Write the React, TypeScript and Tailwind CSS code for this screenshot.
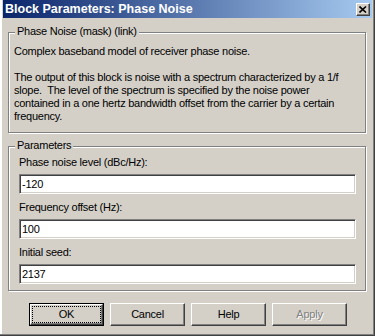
import React from "react";

const bevelRaised =
	"border border-t-white border-l-white border-r-[#404040] border-b-[#404040] shadow-[inset_-1px_-1px_0_#808080]";

const GroupBox: React.FC<{ title: string; className?: string; children: React.ReactNode }> = ({
	title,
	className,
	children,
}) => (
	<div
		className={`relative w-[358px] ml-[5px] border border-[#808080] shadow-[inset_1px_1px_0_#fff,1px_1px_0_#fff] ${className ?? ""}`}
	>
		<span className="absolute top-[-8px] left-[6px] px-[2px] bg-[#d4d0c8] leading-[13px]">{title}</span>
		{children}
	</div>
);

const Field: React.FC<{ label: string; value: string; className?: string }> = ({ label, value, className }) => (
	<div className={className}>
		<div className="leading-[13px]">{label}</div>
		<div className="mt-[5px] w-[337px] h-[20px] bg-white border border-t-[#808080] border-l-[#808080] border-r-white border-b-white shadow-[inset_1px_1px_0_#404040,inset_-1px_-1px_0_#d4d0c8] flex items-center pl-[2px] leading-[13px]">
			{value}
		</div>
	</div>
);

const Button: React.FC<{ label: string; disabled?: boolean }> = ({ label, disabled }) => (
	<div className={`w-[75px] h-[23px] flex items-center justify-center bg-[#d4d0c8] ${bevelRaised}`}>
		<span className={disabled ? "text-[#808080] [text-shadow:1px_1px_0_#fff]" : ""}>{label}</span>
	</div>
);

export default function App() {
	return (
		<div className="w-[375px] h-[336px] bg-[#d4d0c8] text-black text-[11px] font-['Liberation_Sans',Arial,sans-serif] tracking-[-0.25px] flex flex-col pl-[3px] pr-[3px] shadow-[inset_-1px_-1px_0_#404040,inset_-2px_-2px_0_#808080,inset_2px_0_0_#fff] overflow-hidden">
			{/* title bar */}
			<div className="h-[18px] w-[369px] flex items-center justify-between pl-[2px] pr-[2px] bg-[linear-gradient(to_right,#0a246a,#a6caf0)]">
				<span className="text-white font-bold text-[12.5px] tracking-normal leading-[13px]">
					Block Parameters: Phase Noise
				</span>
				<div className={`w-[14px] h-[13px] flex items-center justify-center bg-[#d4d0c8] ${bevelRaised}`}>
					<svg width="8" height="7" viewBox="0 0 8 7">
						<path d="M0.5 0.5 L7 6.5 M7 0.5 L0.5 6.5" stroke="#000" strokeWidth="1.6" />
					</svg>
				</div>
			</div>

			<GroupBox title="Phase Noise (mask) (link)" className="mt-[14px] h-[101px] pt-[12px] pl-[5px]">
				<div className="leading-[13px]">
					Complex baseband model of receiver phase noise.
					<br />
					<br />
					The output of this block is noise with a spectrum characterized by a 1/f
					<br />
					slope.&nbsp; The level of the spectrum is specified by the noise power
					<br />
					contained in a one hertz bandwidth offset from the carrier by a certain
					<br />
					frequency.
				</div>
			</GroupBox>

			<GroupBox title="Parameters" className="mt-[13px] h-[145px] pt-[9px] pl-[10px]">
				<Field label="Phase noise level (dBc/Hz):" value="-120" />
				<Field label="Frequency offset (Hz):" value="100" className="mt-[7px]" />
				<Field label="Initial seed:" value="2137" className="mt-[7px]" />
			</GroupBox>

			<div className="mt-[12px] pl-[26px] flex gap-[6px]">
				<div className="w-[75px] h-[23px] border border-black flex">
					<div className={`flex-1 flex p-px bg-[#d4d0c8] ${bevelRaised}`}>
						<div className="flex-1 border border-dotted border-black flex items-center justify-center">
							OK
						</div>
					</div>
				</div>
				<Button label="Cancel" />
				<Button label="Help" />
				<Button label="Apply" disabled />
			</div>
		</div>
	);
}
